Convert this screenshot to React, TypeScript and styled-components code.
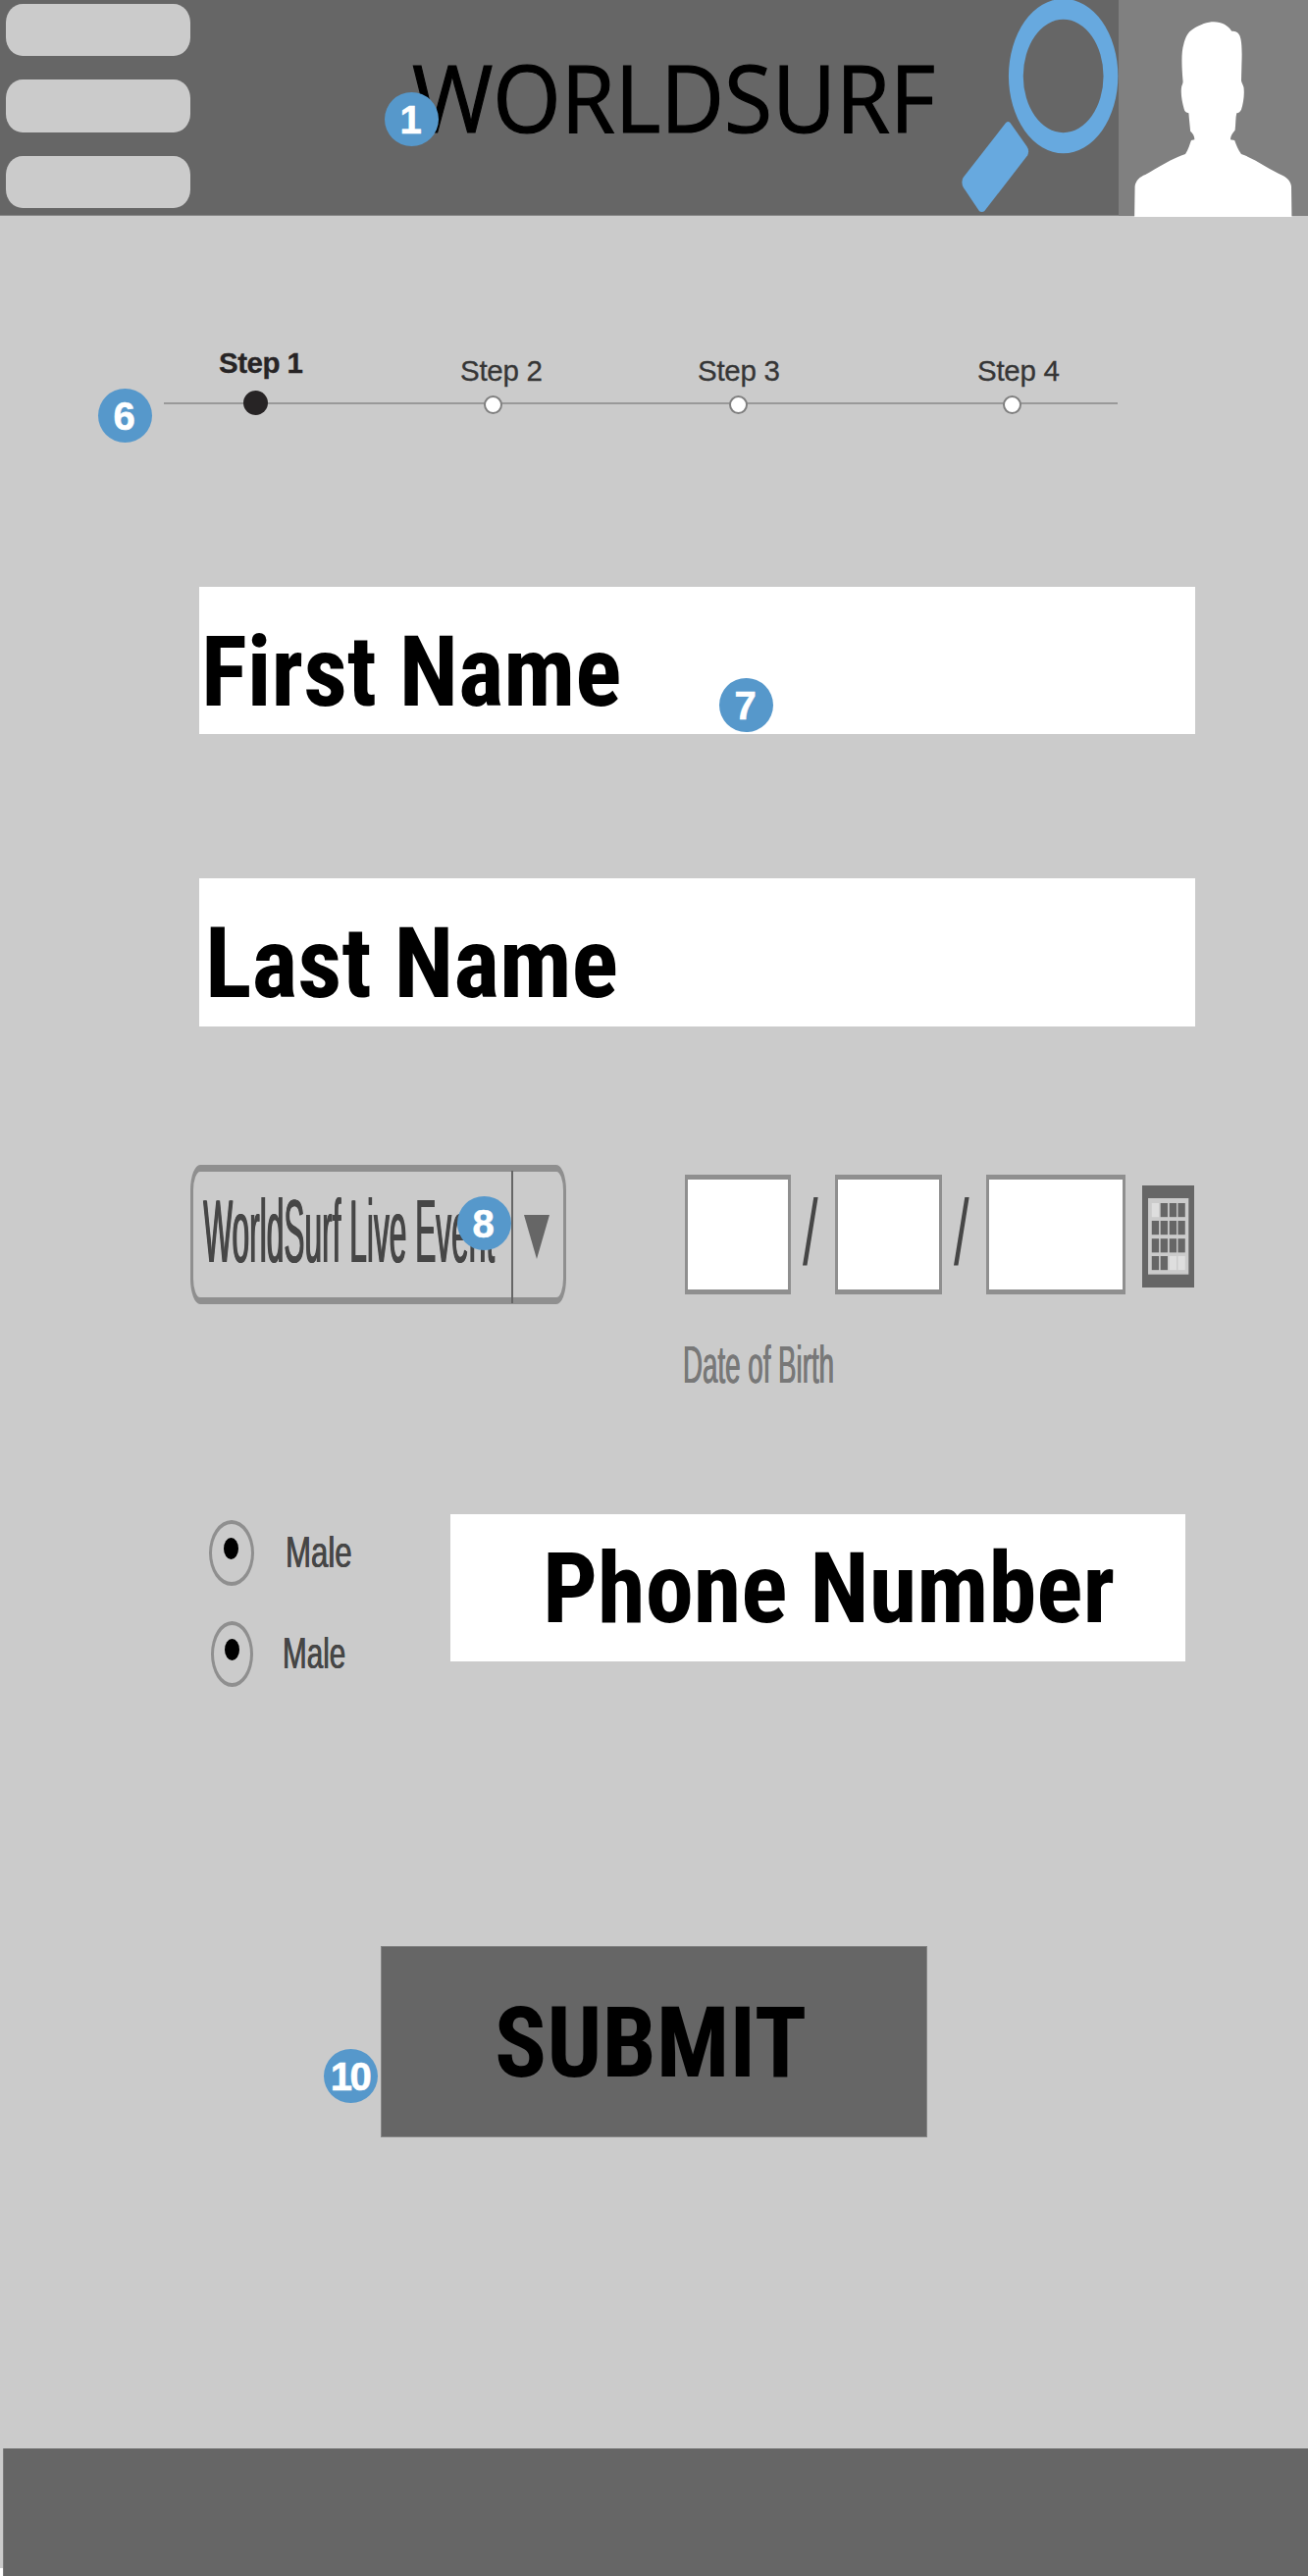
import React from 'react';
import styled, { createGlobalStyle, css } from 'styled-components';

const sans = "'Liberation Sans', Arial, sans-serif";
const condensed = "'Roboto Condensed', Roboto, sans-serif";

const GlobalStyle = createGlobalStyle`
  *, *::before, *::after { box-sizing: border-box; }
  body { margin: 0; background: #fff; font-family: ${sans}; }
`;

const Page = styled.div`
  width: 1333px;
  height: 2625px;
  display: flex;
  flex-direction: column;
  overflow: hidden;
  background: linear-gradient(#cbcbcb 2617px, #fff 2617px);
`;

const Badge = styled.span<{ $x: number; $y: number; $wide?: boolean }>`
  position: absolute;
  left: ${p => p.$x}px;
  top: ${p => p.$y}px;
  z-index: 1;
  width: 55px;
  height: 55px;
  padding-right: 2px;
  border-radius: 50%;
  display: flex;
  align-items: center;
  justify-content: center;
  background: #5698cb;
  color: #fff;
  font: bold 40px/40px ${sans};
  letter-spacing: ${p => (p.$wide ? '-2.5px' : 0)};
  -webkit-text-stroke: 0.6px #fff;
`;

/* Text squeezed horizontally; $squeeze is the width factor. */
const squeezed = css<{ $squeeze: number }>`
  display: block;
  white-space: nowrap;
  line-height: 1;
  transform: scaleX(${p => p.$squeeze});
  transform-origin: 0 0;
`;

const Header = styled.header`
  position: relative;
  display: flex;
  flex: none;
  height: 220px;
  background: #666;
  box-shadow: inset 0 -1px #868686;
`;

const Menu = styled.nav`
  flex: none;
  width: 194px;
  padding: 4px 0 0 6px;
  display: flex;
  flex-direction: column;
  gap: 24px;
`;

const MenuBar = styled.span`
  height: 53.3px;
  border-radius: 17px / 19px;
  background: #cbcbcb;
`;

const Brand = styled.h1<{ $squeeze: number }>`
  ${squeezed}
  flex: none;
  width: 533px;
  margin: 51px 0 0 226px;
  font-family: 'Open Sans', 'Noto Sans', sans-serif;
  font-size: 95px;
  font-weight: 400;
  -webkit-text-stroke: 1.2px #000;
  color: #000;
`;

const SearchIcon = styled.svg`
  flex: none;
  width: 161px;
  height: 220px;
  margin-left: 26px;
  fill: #67a9df;
`;

const Avatar = styled.div`
  flex: none;
  width: 193px;
  height: 220px;
  background: #808080;
  svg {
    display: block;
    width: 193px;
    height: 221px;
    fill: #fff;
  }
`;

const Form = styled.main`
  display: flex;
  flex-direction: column;
`;

const Stepper = styled.section`
  position: relative;
  width: 972px;
  margin: 135px 0 0 167px;
`;

const StepLabels = styled.div`
  display: flex;
  height: 43px;
`;

const StepLabel = styled.span<{ $gap: number; $active?: boolean }>`
  flex: none;
  width: 84px;
  white-space: nowrap;
  margin-left: ${p => p.$gap}px;
  margin-top: ${p => (p.$active ? 0 : 8)}px;
  font-size: 29.5px;
  line-height: 30px;
  font-weight: ${p => (p.$active ? 700 : 400)};
  letter-spacing: ${p => (p.$active ? '-0.5px' : '-0.3px')};
  -webkit-text-stroke: 0.3px currentColor;
  color: ${p => (p.$active ? '#272425' : '#363636')};
`;

const StepRail = styled.div`
  display: flex;
  align-items: center;
  height: 25px;
  background: linear-gradient(#999, #999) 0 12px / 100% 2px no-repeat;
`;

const StepDot = styled.span<{ $gap: number; $active?: boolean }>`
  flex: none;
  width: ${p => (p.$active ? 25 : 19)}px;
  height: ${p => (p.$active ? 25 : 19)}px;
  margin-left: ${p => p.$gap}px;
  margin-top: ${p => (p.$active ? 0 : 4)}px;
  border-radius: 50%;
  border: ${p => (p.$active ? 'none' : '2px solid #808080')};
  background: ${p => (p.$active ? '#272425' : '#fff')};
`;

const Field = styled.div<{ $top: number; $height: number; $inset: number }>`
  position: relative;
  width: 1015px;
  height: ${p => p.$height}px;
  margin: ${p => p.$top}px 0 0 203px;
  padding: 36px 0 0 ${p => p.$inset}px;
  background: #fff;
`;

const FieldText = styled.span<{ $squeeze: number }>`
  ${squeezed}
  font-family: ${condensed};
  font-size: 101px;
  font-weight: 700;
  color: #000;
`;

const DetailRow = styled.div`
  display: flex;
  align-items: flex-start;
  height: 230px;
  margin: 141px 0 0 194px;
`;

const Select = styled.div`
  position: relative;
  flex: none;
  display: flex;
  width: 383px;
  height: 142px;
  border: solid #8f8f8f;
  border-width: 7px 3px;
  border-radius: 10px / 26px;
`;

const SelectText = styled.span<{ $squeeze: number }>`
  ${squeezed}
  flex: none;
  width: 324px;
  padding: 16px 0 0 29px;
  font-size: 90px;
  text-shadow: 1.3px 0 #464646, -1.3px 0 #464646;
  color: #464646;
`;

const SelectArrow = styled.span`
  width: 53px;
  height: 135px;
  margin-top: -1px;
  padding: 45px 0 0 11px;
  border-left: 2px solid #666;
  &::after {
    content: '';
    display: block;
    width: 26px;
    height: 45px;
    background: #666;
    clip-path: polygon(0 0, 100% 0, 50% 100%);
  }
`;

const BirthDate = styled.div`
  margin: 10px 0 0 121px;
`;

const DateInputs = styled.div`
  display: flex;
  height: 122px;
`;

const DateBox = styled.span<{ $width: number }>`
  flex: none;
  width: ${p => p.$width}px;
  height: 122px;
  border: solid #8f8f8f;
  border-width: 5px 3px;
  background: #fff;
`;

const Slash = styled.span<{ $squeeze: number }>`
  ${squeezed}
  flex: none;
  width: 33px;
  margin: 13px 0 0 12px;
  font-size: 94px;
  color: #464646;
`;

const Calendar = styled.svg`
  flex: none;
  width: 53px;
  height: 104px;
  margin: 11px 0 0 17px;
`;

const BirthLabel = styled.span<{ $squeeze: number }>`
  ${squeezed}
  margin: 45px 0 0 -2px;
  font-size: 53.5px;
  text-shadow: 0.5px 0 #787878, -0.5px 0 #787878;
  color: #787878;
`;

const ContactRow = styled.div`
  display: flex;
  height: 176px;
  margin: 126px 0 0 213px;
`;

const RadioGroup = styled.div`
  flex: none;
  display: flex;
  flex-direction: column;
  gap: 36px;
  width: 246px;
  padding-top: 6px;
`;

const RadioOption = styled.label<{ $inset: number }>`
  display: flex;
  height: 67px;
  padding-left: ${p => p.$inset}px;
`;

const RadioRing = styled.span<{ $width: number }>`
  flex: none;
  width: ${p => p.$width}px;
  height: 67px;
  display: flex;
  align-items: center;
  justify-content: center;
  padding: 0 1px 9px 0;
  border: solid #8f8f8f;
  border-width: 4px 3px;
  border-radius: 50%;
  &::after {
    content: '';
    width: 15px;
    height: 22px;
    border-radius: 50%;
    background: #000;
  }
`;

const RadioText = styled.span<{ $squeeze: number; $gap: number }>`
  ${squeezed}
  margin: 11px 0 0 ${p => p.$gap}px;
  font-size: 44.5px;
  text-shadow: 0.4px 0 #464646, -0.4px 0 #464646;
  color: #464646;
`;

const PhoneField = styled.div`
  flex: none;
  width: 749px;
  height: 150px;
  padding: 25px 0 0 94px;
  background: #fff;
`;

const SubmitArea = styled.div`
  position: relative;
  width: 557px;
  margin: 264px 0 0 388px;
`;

const SubmitButton = styled.button`
  display: block;
  width: 557px;
  height: 195px;
  padding: 1px 0 0 115px;
  border: 1px solid #858585;
  background: #666;
  text-align: left;
`;

const Footer = styled.footer`
  height: 130px;
  margin: 317px 0 0 3px;
  background: #666;
  border-left: 1px solid #7a7a7a;
`;

const calendarKeys = [1382.5, 1407.5, 1433, 1457.5].flatMap((x, col) =>
  [138, 192, 246.5, 300].map((y, row) => ({
    x,
    y,
    faded: (row === 0 && col === 0) || (row === 3 && col > 1),
  })),
);

export default function App() {
  return (
    <>
      <GlobalStyle />
      <Page>
        <Header>
          <Menu>
            <MenuBar />
            <MenuBar />
            <MenuBar />
          </Menu>
          <Brand $squeeze={0.939}>WORLDSURF</Brand>
          <Badge $x={392} $y={94}>1</Badge>
          <SearchIcon viewBox="734 0 380 660" preserveAspectRatio="none">
            <path
              fillRule="evenodd"
              d="M849.5 232.5a131.5 236 0 1 1 263 0a131.5 236 0 1 1 -263 0ZM884.5 232.5a96.5 173 0 1 0 193 0a96.5 173 0 1 0 -193 0Z"
            />
            <path d="M843 375Q848 369 853 375L893 447Q900 460 895 475L791 646Q785 650 779 646L741 574Q734 558 740 543Z" />
          </SearchIcon>
          <Avatar>
            <svg viewBox="1114 0 454 663" preserveAspectRatio="none">
              <path d="M1152 663L1153 570C1155 552 1165 540 1178 534C1205 515 1245 482 1274 471C1281 458 1285 440 1288 429L1296 427C1296 415 1292 408 1286 401C1285 385 1283 365 1282 346C1276 345 1272 340 1271 334C1266 310 1262 285 1265 264C1267 258 1269 252 1268 246C1265 200 1264 160 1270 135C1274 115 1280 98 1291 90C1310 74 1328 67 1342 67C1362 67 1376 78 1385 95C1395 95 1400 98 1404 108C1410 125 1410 160 1409 195L1408 247C1409 255 1413 260 1414 268C1416 290 1413 315 1408 335C1406 341 1402 345 1397 346C1394 360 1395 380 1393 398C1387 408 1382 415 1382 427L1392 429C1396 442 1400 458 1408 471C1440 485 1475 518 1508 537C1520 545 1527 556 1528 570L1529 663Z" />
            </svg>
          </Avatar>
        </Header>

        <Form>
          <Stepper>
            <StepLabels>
              <StepLabel $active $gap={56}>Step 1</StepLabel>
              <StepLabel $gap={162}>Step 2</StepLabel>
              <StepLabel $gap={158}>Step 3</StepLabel>
              <StepLabel $gap={201}>Step 4</StepLabel>
            </StepLabels>
            <StepRail>
              <StepDot $active $gap={81} />
              <StepDot $gap={220} />
              <StepDot $gap={231} />
              <StepDot $gap={260} />
            </StepRail>
            <Badge $x={-67} $y={41}>6</Badge>
          </Stepper>

          <Field $top={175} $height={150} $inset={2}>
            <FieldText $squeeze={0.974}>First Name</FieldText>
            <Badge $x={530} $y={93}>7</Badge>
          </Field>
          <Field $top={147} $height={151} $inset={6}>
            <FieldText $squeeze={0.982}>Last Name</FieldText>
          </Field>

          <DetailRow>
            <Select>
              <SelectText $squeeze={0.352}>WorldSurf Live Event</SelectText>
              <SelectArrow />
              <Badge $x={269} $y={25}>8</Badge>
            </Select>
            <BirthDate>
              <DateInputs>
                <DateBox $width={108} />
                <Slash $squeeze={0.6}>/</Slash>
                <DateBox $width={109} />
                <Slash $squeeze={0.6}>/</Slash>
                <DateBox $width={142} />
                <Calendar viewBox="1355 84 149 312" preserveAspectRatio="none">
                  <rect x="1355" y="84" width="149" height="312" fill="#666" />
                  <rect x="1372" y="123" width="116" height="233" fill="#cbcbcb" />
                  {calendarKeys.map(k => (
                    <rect
                      key={`${k.x}-${k.y}`}
                      x={k.x}
                      y={k.y}
                      width="20.5"
                      height="42.5"
                      fill={k.faded ? '#dedede' : '#666'}
                    />
                  ))}
                </Calendar>
              </DateInputs>
              <BirthLabel $squeeze={0.518}>Date of Birth</BirthLabel>
            </BirthDate>
          </DetailRow>

          <ContactRow>
            <RadioGroup>
              <RadioOption $inset={0}>
                <RadioRing $width={46} />
                <RadioText $squeeze={0.702} $gap={31.5}>Male</RadioText>
              </RadioOption>
              <RadioOption $inset={2}>
                <RadioRing $width={43} />
                <RadioText $squeeze={0.666} $gap={30}>Male</RadioText>
              </RadioOption>
            </RadioGroup>
            <PhoneField>
              <FieldText $squeeze={0.977}>Phone Number</FieldText>
            </PhoneField>
          </ContactRow>

          <SubmitArea>
            <SubmitButton>
              <FieldText $squeeze={0.976}>SUBMIT</FieldText>
            </SubmitButton>
            <Badge $wide $x={-58} $y={105}>10</Badge>
          </SubmitArea>
        </Form>

        <Footer />
      </Page>
    </>
  );
}
